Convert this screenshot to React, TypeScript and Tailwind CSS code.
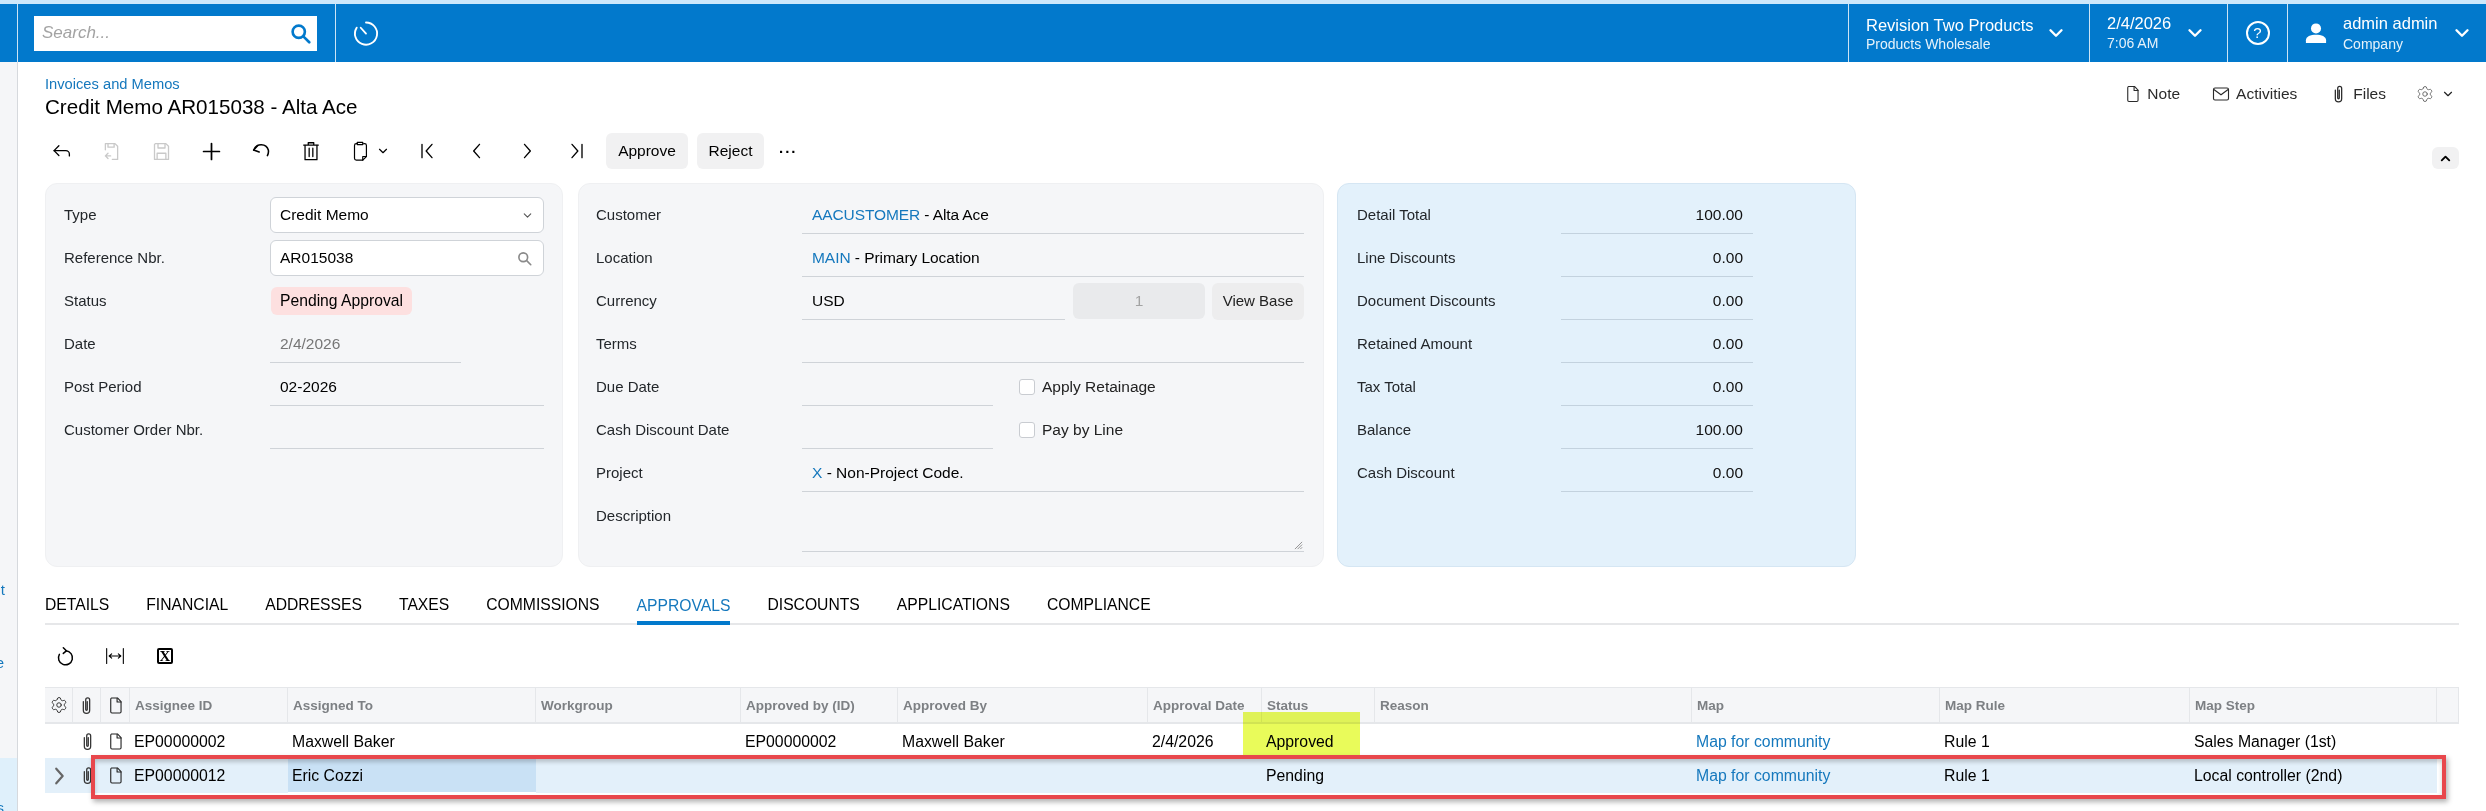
import React from 'react';
import { Settings } from 'lucide-react';

type IconProps = { className?: string };

// all toolbar icons share one 24 box, stroke colour comes from the parent text colour
const Svg: React.FC<{ className?: string; sw?: number; children: React.ReactNode }> = ({ className, sw = 1.5, children }) => (
  <svg viewBox="0 0 24 24" fill="none" stroke="currentColor" strokeWidth={sw} strokeLinecap="round" strokeLinejoin="round" className={className}>
    {children}
  </svg>
);

const Chevron: React.FC<IconProps & { sw?: number }> = ({ className, sw = 2 }) => (
  <Svg className={className} sw={sw}><path d="M6 9l6 6 6-6" /></Svg>
);
const Clip: React.FC<IconProps> = ({ className }) => (
  <Svg className={className} sw={1.6}><path d="M13 7v10a1 1 0 0 1-2 0V5a2.5 2.5 0 0 1 5 0v13a4 4 0 0 1-8 0V7" /></Svg>
);
const Doc: React.FC<IconProps> = ({ className }) => (
  <Svg className={className} sw={1.4}><path d="M7 2.5h7.5L19 7v13a1.5 1.5 0 0 1-1.5 1.5h-10A1.5 1.5 0 0 1 6 20V4a1.5 1.5 0 0 1 1-1.5z" /><path d="M14 3v4.5h5" /></Svg>
);
const Floppy: React.FC<IconProps> = ({ className }) => (
  <Svg className={className} sw={1.5}><path d="M5 3h12l3 3v15H4V4z" /><path d="M8 3v5h8V3M7 21v-7h10v7" /></Svg>
);

const ToolSlot: React.FC<{ w?: string; children: React.ReactNode }> = ({ w = 'w-[50px]', children }) => (
  <div className={`${w} h-[36px] flex items-center justify-center shrink-0`}>{children}</div>
);

const Label: React.FC<{ w: string; children: React.ReactNode }> = ({ w, children }) => (
  <div className={`${w} shrink-0 pt-[1px] text-[15px] text-[#23272b]`}>{children}</div>
);

const Line: React.FC<{ className?: string; children?: React.ReactNode }> = ({ className = 'flex-1', children }) => (
  <div className={`${className} h-[37px] border-b border-[#cfd3d8] pl-[10px] flex items-center text-[15.5px] text-black`}>{children}</div>
);

const Link: React.FC<{ children: React.ReactNode }> = ({ children }) => <span className="text-[#1578bd]">{children}</span>;

const Field: React.FC<{ children?: React.ReactNode }> = ({ children }) => (
  <div className="flex h-[36px] items-center">{children}</div>
);

const totals = [
  ['Detail Total', '100.00'],
  ['Line Discounts', '0.00'],
  ['Document Discounts', '0.00'],
  ['Retained Amount', '0.00'],
  ['Tax Total', '0.00'],
  ['Balance', '100.00'],
  ['Cash Discount', '0.00'],
];

const tabs = ['DETAILS', 'FINANCIAL', 'ADDRESSES', 'TAXES', 'COMMISSIONS', 'APPROVALS', 'DISCOUNTS', 'APPLICATIONS', 'COMPLIANCE'];

const gridCols = 'grid grid-cols-[28px_28px_29px_158px_248px_205px_157px_250px_114px_113px_317px_248px_250px_247px_22px]';

const headers = ['Assignee ID', 'Assigned To', 'Workgroup', 'Approved by (ID)', 'Approved By', 'Approval Date', 'Status', 'Reason', 'Map', 'Map Rule', 'Map Step'];

const HeadCell: React.FC<{ children?: React.ReactNode; className?: string }> = ({ children, className = '' }) => (
  <div className={`flex items-center border-r border-[#e5e7ea] ${className}`}>{children}</div>
);

const Cell: React.FC<{ children?: React.ReactNode; className?: string }> = ({ children, className = '' }) => (
  <div className={`flex items-center pl-[4px] pt-[1px] whitespace-nowrap ${className}`}>{children}</div>
);

export default function App() {
  return (
    <div className="relative w-[2486px] h-[811px] overflow-hidden bg-white flex flex-col font-['Liberation_Sans',Arial,sans-serif]">
      <div className="h-[4px] bg-[#cde8fb] shrink-0" />

      {/* top bar */}
      <header className="h-[58px] shrink-0 bg-[#0279cc] flex text-white">
        <div className="w-[17px] shrink-0" />
        <div className="w-[318px] shrink-0 border-l border-white/80 pl-[16px] flex items-center">
          <div className="w-[283px] h-[35px] bg-white flex items-center justify-between pl-[8px] pr-[6px]">
            <span className="italic text-[17px] text-[#a3a3a3]">Search...</span>
            <svg viewBox="0 0 24 24" fill="none" stroke="#0279cc" strokeWidth="3" strokeLinecap="round" className="w-[21px] h-[21px]">
              <circle cx="10" cy="10" r="7" />
              <path d="M15.5 15.5L22 22" />
            </svg>
          </div>
        </div>
        <div className="w-[60px] shrink-0 border-l border-white/80 flex items-center justify-center">
          <Svg className="w-[28px] h-[28px]" sw={1.6}>
            <path d="M12 3a9.5 9.5 0 1 1-8 4.4" />
            <path d="M12 12.5L7.5 7.5" />
          </Svg>
        </div>
        <div className="flex-1" />
        <div className="w-[241px] shrink-0 border-l border-white/80 pl-[17px] pr-[22px] flex items-center justify-between">
          <div>
            <div className="text-[16.5px] leading-[20px] pt-[1px]">Revision Two Products</div>
            <div className="text-[14px] leading-[18px] text-white/90">Products Wholesale</div>
          </div>
          <Chevron className="w-[22px] h-[22px]" sw={2.6} />
        </div>
        <div className="w-[138px] shrink-0 border-l border-white/80 pl-[17px] pr-[21px] flex items-center justify-between">
          <div>
            <div className="text-[16.5px] leading-[20px]">2/4/2026</div>
            <div className="text-[14px] leading-[20px] text-white/90">7:06 AM</div>
          </div>
          <Chevron className="w-[22px] h-[22px]" sw={2.6} />
        </div>
        <div className="w-[60px] shrink-0 border-l border-white/80 flex items-center justify-center">
          <div className="w-[24px] h-[24px] rounded-full border-2 border-white flex items-center justify-center text-[15px]">?</div>
        </div>
        <div className="w-[199px] shrink-0 border-l border-white/80 pl-[17px] pr-[13px] flex items-center justify-between">
          <div className="flex items-center gap-[16px]">
            <svg viewBox="0 0 24 24" fill="white" className="w-[22px] h-[24px]">
              <circle cx="12" cy="7" r="5.5" />
              <path d="M1 23v-3c0-4 5-6 11-6s11 2 11 6v3z" />
            </svg>
            <div>
              <div className="text-[16.5px] leading-[22px]">admin admin</div>
              <div className="text-[14px] leading-[20px] text-white/90">Company</div>
            </div>
          </div>
          <Chevron className="w-[22px] h-[22px]" sw={2.6} />
        </div>
      </header>

      <div className="flex flex-1 min-h-0">
        {/* collapsed side menu, only clipped letters show */}
        <aside className="w-[18px] shrink-0 bg-[#f5f6f8] border-r border-[#d6d9dd] flex flex-col text-[15px] text-[#1578bd] leading-[18px] overflow-hidden">
          <div className="mt-[519px] h-[18px] flex justify-end pr-[12px]">ut</div>
          <div className="mt-[55px] h-[18px] flex justify-end pr-[13px]">e</div>
          <div className="mt-[86px] flex-1 bg-[#dff0fb] flex flex-col justify-end">
            <div className="h-[12px] flex justify-end pr-[13px]">s</div>
          </div>
        </aside>

        <main className="flex-1 min-w-0 pl-[27px] pr-[27px] flex flex-col">
          {/* title row */}
          <div className="h-[64px] shrink-0 flex justify-between">
            <div className="pt-[13px]">
              <div className="text-[14.7px] leading-[18px] text-[#1578bd]">Invoices and Memos</div>
              <div className="text-[20.6px] leading-[26px] mt-[1px] text-black">Credit Memo AR015038 - Alta Ace</div>
            </div>
            <div className="flex items-start pt-[22px] pr-[4px] text-[15.5px] text-[#2b2b2b]">
              <div className="flex items-center h-[20px]">
                <Doc className="w-[19px] h-[20px]" />
                <span className="ml-[5px]">Note</span>
              </div>
              <div className="flex items-center h-[20px] ml-[32px]">
                <svg viewBox="0 0 24 24" fill="none" stroke="currentColor" strokeWidth="1.5" className="w-[18px] h-[18px]">
                  <rect x="2" y="4" width="20" height="16" rx="2" />
                  <path d="M2.5 6L12 13l9.5-7" />
                </svg>
                <span className="ml-[6px]">Activities</span>
              </div>
              <div className="flex items-center h-[20px] ml-[32px]">
                <Clip className="w-[19px] h-[20px]" />
                <span className="ml-[5px]">Files</span>
              </div>
              <div className="flex items-center h-[20px] ml-[30px] text-[#555]">
                <Settings className="w-[18px] h-[18px]" strokeWidth={1.1} />
                <Chevron className="w-[14px] h-[14px] ml-[7px] text-[#222]" />
              </div>
            </div>
          </div>

          {/* main toolbar */}
          <div className="mt-[7px] h-[36px] shrink-0 flex items-center -ml-[9px] text-black">
            <ToolSlot>
              <Svg className="w-[21px] h-[21px]"><path d="M3.5 11H17a4 4 0 0 1 4 4v2" /><path d="M9 5.5L3.5 11 9 16.5" /></Svg>
            </ToolSlot>
            <ToolSlot>
              <Svg className="w-[21px] h-[21px] text-[#c9c9c9]"><path d="M5 10V3h11l3 3v15h-6" /><path d="M8 3v4h7V3" /><path d="M11 17H5m3-3l-3 3 3 3" /></Svg>
            </ToolSlot>
            <ToolSlot><Floppy className="w-[21px] h-[21px] text-[#c9c9c9]" /></ToolSlot>
            <ToolSlot>
              <Svg className="w-[19px] h-[19px]" sw={2.2}><path d="M12 2v20M2 12h20" /></Svg>
            </ToolSlot>
            <ToolSlot>
              <Svg className="w-[22px] h-[22px]" sw={1.7}><path d="M4 11l4.5-5M4 11l6 2" /><path d="M4.5 10.5A8.2 8.2 0 0 1 20 11c.5 2.5-.2 4.5-1 6" /></Svg>
            </ToolSlot>
            <ToolSlot>
              <Svg className="w-[22px] h-[22px]" sw={1.4}><path d="M4 5.5h16M9 5V3h6v2" /><path d="M5.5 6v15.5h13V6" /><path d="M10 9v9M14 9v9" /></Svg>
            </ToolSlot>
            <ToolSlot w="w-[66px]">
              <div className="flex items-center">
                <Svg className="w-[22px] h-[24px]" sw={1.3}><path d="M9 4H8a2 2 0 0 0-2 2v14a2 2 0 0 0 2 2h7l4-4V6a2 2 0 0 0-2-2h-1" /><path d="M9 2.5h6V5H9zM15 22v-4h4" /></Svg>
                <Chevron className="w-[14px] h-[14px] ml-[5px]" />
              </div>
            </ToolSlot>
            <ToolSlot>
              <Svg className="w-[20px] h-[20px]" sw={1.6}><path d="M6 4v16M18 4l-7 8 7 8" /></Svg>
            </ToolSlot>
            <ToolSlot>
              <Svg className="w-[20px] h-[20px]" sw={1.6}><path d="M15 4l-7 8 7 8" /></Svg>
            </ToolSlot>
            <ToolSlot>
              <Svg className="w-[20px] h-[20px]" sw={1.6}><path d="M9 4l7 8-7 8" /></Svg>
            </ToolSlot>
            <ToolSlot>
              <Svg className="w-[20px] h-[20px]" sw={1.6}><path d="M18 4v16M6 4l7 8-7 8" /></Svg>
            </ToolSlot>
            <div className="ml-[4px] w-[82px] h-[36px] rounded-[6px] bg-[#f1f1f2] flex items-center justify-center text-[15.5px]">Approve</div>
            <div className="ml-[9px] w-[67px] h-[36px] rounded-[6px] bg-[#f1f1f2] flex items-center justify-center text-[15.5px]">Reject</div>
            <div className="ml-[15px] text-[15px] font-bold tracking-[2px] -mt-[6px]">...</div>
            <div className="ml-auto mt-[14px] w-[27px] h-[22px] rounded-[6px] bg-[#f1f1f2] flex items-center justify-center">
              <Chevron className="w-[15px] h-[15px] rotate-180" sw={3} />
            </div>
          </div>

          {/* form panels */}
          <div className="mt-[14px] h-[384px] shrink-0 flex">
            <section className="w-[518px] shrink-0 rounded-[12px] bg-[#f5f6f8] border border-[#eff0f2] pl-[18px] pr-[18px] pt-[13px] flex flex-col gap-[7px]">
              <Field>
                <Label w="w-[206px]">Type</Label>
                <div className="flex-1 h-[36px] bg-white border border-[#cfd3d8] rounded-[6px] pl-[9px] pr-[9px] flex items-center justify-between text-[15.5px] text-black">
                  Credit Memo
                  <Chevron className="w-[13px] h-[13px] text-[#555]" />
                </div>
              </Field>
              <Field>
                <Label w="w-[206px]">Reference Nbr.</Label>
                <div className="flex-1 h-[36px] bg-white border border-[#cfd3d8] rounded-[6px] pl-[9px] pr-[11px] flex items-center justify-between text-[15.5px] text-black">
                  AR015038
                  <svg viewBox="0 0 24 24" fill="none" stroke="#8a8a8a" strokeWidth="2.6" strokeLinecap="round" className="w-[15px] h-[15px]">
                    <circle cx="10" cy="10" r="7" />
                    <path d="M15.5 15.5L22 22" />
                  </svg>
                </div>
              </Field>
              <Field>
                <Label w="w-[207px]">Status</Label>
                <div className="h-[28px] px-[9px] rounded-[6px] bg-[#fde0e0] flex items-center text-[15.7px] text-black">Pending Approval</div>
              </Field>
              <Field>
                <Label w="w-[206px]">Date</Label>
                <Line className="w-[191px]"><span className="text-[#767676]">2/4/2026</span></Line>
              </Field>
              <Field>
                <Label w="w-[206px]">Post Period</Label>
                <Line>02-2026</Line>
              </Field>
              <Field>
                <Label w="w-[206px]">Customer Order Nbr.</Label>
                <Line />
              </Field>
            </section>

            <section className="ml-[15px] w-[746px] shrink-0 rounded-[12px] bg-[#f5f6f8] border border-[#eff0f2] pl-[17px] pr-[19px] pt-[13px] flex flex-col gap-[7px]">
              <Field>
                <Label w="w-[206px]">Customer</Label>
                <Line className="flex-1 tracking-[-0.1px]"><Link>AACUSTOMER</Link>&nbsp;- Alta Ace</Line>
              </Field>
              <Field>
                <Label w="w-[206px]">Location</Label>
                <Line className="flex-1 tracking-[-0.05px]"><Link>MAIN</Link>&nbsp;- Primary Location</Line>
              </Field>
              <Field>
                <Label w="w-[206px]">Currency</Label>
                <Line className="w-[263px]">USD</Line>
                <div className="ml-[8px] w-[132px] h-[36px] rounded-[6px] bg-[#e9eaec] flex items-center justify-center text-[15.5px] text-[#a3a3a3]">1</div>
                <div className="ml-[7px] flex-1 h-[37px] rounded-[6px] bg-[#ededee] flex items-center justify-center text-[15px] text-[#222]">View Base</div>
              </Field>
              <Field>
                <Label w="w-[206px]">Terms</Label>
                <Line />
              </Field>
              <Field>
                <Label w="w-[206px]">Due Date</Label>
                <Line className="w-[191px]" />
                <div className="ml-[26px] w-[16px] h-[16px] rounded-[3px] border border-[#c9ccd1] bg-white shrink-0" />
                <span className="ml-[7px] text-[15.5px] text-[#222]">Apply Retainage</span>
              </Field>
              <Field>
                <Label w="w-[206px]">Cash Discount Date</Label>
                <Line className="w-[191px]" />
                <div className="ml-[26px] w-[16px] h-[16px] rounded-[3px] border border-[#c9ccd1] bg-white shrink-0" />
                <span className="ml-[7px] text-[15.5px] text-[#222]">Pay by Line</span>
              </Field>
              <Field>
                <Label w="w-[206px]">Project</Label>
                <Line><Link>X</Link>&nbsp;- Non-Project Code.</Line>
              </Field>
              <div className="flex h-[54px] items-start">
                <div className="h-[36px] flex items-center"><Label w="w-[206px]">Description</Label></div>
                <div className="relative flex-1 h-[54px] border-b border-[#cfd3d8]">
                  <svg viewBox="0 0 10 10" stroke="#8a8a8a" strokeWidth="1" className="absolute right-[1px] bottom-[1px] w-[9px] h-[9px]">
                    <path d="M1 9L9 1M4 9l5-5M7 9l2-2" />
                  </svg>
                </div>
              </div>
            </section>

            <section className="ml-[13px] w-[519px] shrink-0 rounded-[12px] bg-[#e3f1fb] border border-[#d5e6f3] pl-[19px] pt-[13px] flex flex-col gap-[7px]">
              {totals.map(([name, value]) => (
                <Field key={name}>
                  <Label w="w-[204px]">{name}</Label>
                  <div className="w-[192px] h-[37px] border-b border-[#c3d2de] pr-[10px] flex items-center justify-end text-[15.5px] text-[#111]">{value}</div>
                </Field>
              ))}
            </section>
          </div>

          {/* tabs */}
          <div className="mt-[19px] h-[39px] shrink-0 flex gap-[37px] border-b-2 border-[#e6e7e9]">
            {tabs.map((t) =>
              t === 'APPROVALS' ? (
                <div key={t} className="h-[39px] flex items-center text-[15.7px] text-[#1578bd] border-b-[4px] border-[#0279cc] pt-[4px]">{t}</div>
              ) : (
                <div key={t} className="h-[37px] flex items-center text-[15.7px] text-black">{t}</div>
              ),
            )}
          </div>

          {/* grid toolbar */}
          <div className="mt-[13px] h-[36px] shrink-0 flex items-center -ml-[5px] text-black">
            <ToolSlot>
              <Svg className="w-[21px] h-[21px]" sw={1.7}><path d="M12.5 5.5a8 8 0 1 1-7.5 4" /><path d="M9.5 2l3.5 3.5-3.5 3" /></Svg>
            </ToolSlot>
            <ToolSlot>
              <Svg className="w-[20px] h-[20px]" sw={1.3}><path d="M2 3v18M22 3v18M5 12h14M8 9.5L5 12l3 2.5M16 9.5l3 2.5-3 2.5" /></Svg>
            </ToolSlot>
            <ToolSlot>
              <div className="w-[16px] h-[16px] border-2 border-black rounded-[2px] flex items-center justify-center font-['Liberation_Serif',serif] font-bold text-[15px] leading-none">X</div>
            </ToolSlot>
          </div>

          {/* approvals grid */}
          <div className="relative mt-[13px] shrink-0">
            <div className={`${gridCols} h-[37px] bg-[#f5f6f8] border-t border-b-2 border-[#e5e7ea] text-[13.5px] font-bold text-[#7d8084]`}>
              <HeadCell className="justify-center text-[#333]"><Settings className="w-[18px] h-[18px]" strokeWidth={1.3} /></HeadCell>
              <HeadCell className="justify-center text-[#333]"><Clip className="w-[19px] h-[21px]" /></HeadCell>
              <HeadCell className="justify-center text-[#222]"><Doc className="w-[19px] h-[21px]" /></HeadCell>
              {headers.map((h) => (
                <HeadCell key={h} className="pl-[5px] pt-[2px] whitespace-nowrap">{h}</HeadCell>
              ))}
              <HeadCell />
            </div>

            <div className={`${gridCols} h-[34px] text-[15.8px] text-black`}>
              <div />
              <div className="flex items-center justify-center text-[#333]"><Clip className="w-[19px] h-[21px]" /></div>
              <div className="flex items-center justify-center text-[#222]"><Doc className="w-[19px] h-[21px]" /></div>
              <Cell>EP00000002</Cell>
              <Cell>Maxwell Baker</Cell>
              <Cell />
              <Cell>EP00000002</Cell>
              <Cell>Maxwell Baker</Cell>
              <Cell>2/4/2026</Cell>
              <Cell>Approved</Cell>
              <Cell />
              <Cell><Link>Map for community</Link></Cell>
              <Cell>Rule 1</Cell>
              <Cell>Sales Manager (1st)</Cell>
            </div>

            <div className={`${gridCols} h-[35px] text-[15.8px] text-black`}>
              <div className="bg-[#e3f0fa] flex items-center justify-center text-[#666]">
                <Svg className="w-[22px] h-[22px]" sw={2.4}><path d="M9 4l7 8-7 8" /></Svg>
              </div>
              <div className="bg-[#e3f0fa] flex items-center justify-center text-[#333]"><Clip className="w-[19px] h-[21px]" /></div>
              <div className="bg-[#e3f0fa] flex items-center justify-center text-[#222]"><Doc className="w-[19px] h-[21px]" /></div>
              <Cell className="bg-[#e3f0fa]">EP00000012</Cell>
              <Cell className="bg-[#c9e1f5] my-[1px]">Eric Cozzi</Cell>
              <Cell className="bg-[#e3f0fa]" />
              <Cell className="bg-[#e3f0fa]" />
              <Cell className="bg-[#e3f0fa]" />
              <Cell className="bg-[#e3f0fa]" />
              <Cell className="bg-[#e3f0fa]">Pending</Cell>
              <Cell className="bg-[#e3f0fa]" />
              <Cell className="bg-[#e3f0fa]"><Link>Map for community</Link></Cell>
              <Cell className="bg-[#e3f0fa]">Rule 1</Cell>
              <Cell className="bg-[#e3f0fa]">Local controller (2nd)</Cell>
            </div>

            {/* annotations drawn on top of the screenshot */}
            <div className="absolute left-[1198px] top-[25px] w-[117px] h-[43px] bg-[#e9fb5a] mix-blend-multiply" />
            <div className="absolute left-[46px] top-[68px] w-[2355px] h-[44px] border-[4px] border-[#e8474c] shadow-[2px_3px_5px_rgba(0,0,0,0.3),inset_0_3px_4px_rgba(0,0,0,0.2)]" />
          </div>
        </main>
      </div>
    </div>
  );
}
